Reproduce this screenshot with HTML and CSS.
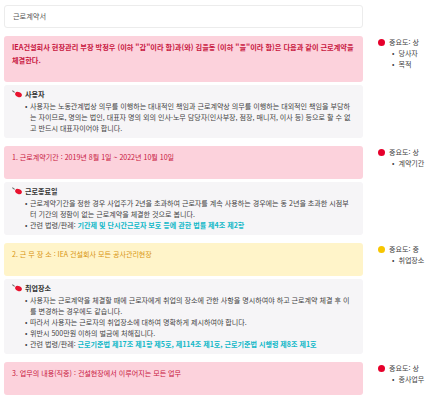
FILE: index.html
```html
<!DOCTYPE html>
<html lang="ko">
<head>
    <meta charset="UTF-8">
    <meta name="viewport" content="width=device-width, initial-scale=1.0">
    <title>근로계약서</title>
    <link rel="stylesheet" href="styles.css">
</head>
<body>
    <div class="review">
        <div class="main-col">
            <div class="doc-title">근로계약서</div>
        </div>
        <div class="side-col"></div>

        <!-- 당사자 -->
        <div class="main-col group">
            <div class="clause clause-red clause-bold">
                IEA건설회사 현장관리 부장 박정우 (이하 "갑"이라 함)과(와) 김을동 (이하 "을"이라 함)은 다음과 같이 근로계약을 체결한다.
            </div>
            <div class="detail">
                <div class="detail-title"><span class="pin"></span>사용자</div>
                <ul class="detail-list">
                    <li>사용자는 노동관계법상 의무를 이행하는 대내적인 책임과 근로계약상 의무를 이행하는 대외적인 책임을 부담하는 자이므로, 명의는 법인, 대표자 명의 외의 인사·노무 담당자(인사부장, 점장, 매니저, 이사 등) 등으로 할 수 없고 반드시 대표자이어야 합니다.</li>
                </ul>
            </div>
        </div>
        <div class="side-col">
            <div class="note">
                <div class="note-level"><span class="dot dot-high"></span>중요도: 상</div>
                <ul class="note-list">
                    <li>당사자</li>
                    <li>목적</li>
                </ul>
            </div>
        </div>

        <!-- 계약기간 -->
        <div class="main-col group">
            <div class="clause clause-red">1. 근로계약기간 : 2019년 8월 1일 ~ 2022년 10월 10일</div>
            <div class="detail">
                <div class="detail-title"><span class="pin"></span>근로종료일</div>
                <ul class="detail-list">
                    <li>근로계약기간을 정한 경우 사업주가 2년을 초과하여 근로자를 계속 사용하는 경우에는 동 2년을 초과한 시점부터 기간의 정함이 없는 근로계약을 체결한 것으로 봅니다.</li>
                    <li>관련 법령/판례: <span class="law">기간제 및 단시간근로자 보호 등에 관한 법률 제4조 제2항</span></li>
                </ul>
            </div>
        </div>
        <div class="side-col">
            <div class="note">
                <div class="note-level"><span class="dot dot-high"></span>중요도: 상</div>
                <ul class="note-list">
                    <li>계약기간</li>
                </ul>
            </div>
        </div>

        <!-- 근무장소 -->
        <div class="main-col group">
            <div class="clause clause-yellow">2. 근 무 장 소 : IEA 건설회사 모든 공사관리현장</div>
            <div class="detail">
                <div class="detail-title"><span class="pin"></span>취업장소</div>
                <ul class="detail-list">
                    <li>사용자는 근로계약을 체결할 때에 근로자에게 취업의 장소에 관한 사항을 명시하여야 하고 근로계약 체결 후 이를 변경하는 경우에도 같습니다.</li>
                    <li>따라서 사용자는 근로자의 취업장소에 대하여 명확하게 제시하여야 합니다.</li>
                    <li>위반시 500만원 이하의 벌금에 처해집니다.</li>
                    <li>관련 법령/판례: <span class="law">근로기준법 제17조 제1항 제5호, 제114조 제1호, 근로기준법 시행령 제8조 제1호</span></li>
                </ul>
            </div>
        </div>
        <div class="side-col">
            <div class="note">
                <div class="note-level"><span class="dot dot-mid"></span>중요도: 중</div>
                <ul class="note-list">
                    <li>취업장소</li>
                </ul>
            </div>
        </div>

        <!-- 업무 -->
        <div class="main-col group">
            <div class="clause clause-red">3. 업무의 내용(직종) : 건설현장에서 이루어지는 모든 업무</div>
        </div>
        <div class="side-col">
            <div class="note">
                <div class="note-level"><span class="dot dot-high"></span>중요도: 상</div>
                <ul class="note-list">
                    <li>종사업무</li>
                </ul>
            </div>
        </div>
    </div>
</body>
</html>
```

FILE: styles.css
```css
* {
    margin: 0;
    padding: 0;
    box-sizing: border-box;
}

body {
    font-family: "Noto Sans CJK KR", "Noto Sans", sans-serif;
    font-size: 7.05px;
    line-height: 11px;
    color: #444;
    background: #fff;
}

.review {
    display: grid;
    grid-template-columns: 359px 1fr;
    column-gap: 15px;
    padding: 5px 0 0 4px;
}

.main-col {
    display: flex;
    flex-direction: column;
    gap: 3px;
}

.group {
    margin-top: 8px;
}

.side-col {
    padding-top: 8px;
}

.doc-title {
    height: 23px;
    line-height: 21px;
    padding: 0 8px;
    border: 1px solid #ececec;
    border-radius: 3px;
    font-size: 7.2px;
    color: #555;
}

.clause {
    padding: 5px 8px 15px;
    line-height: 13px;
    border-radius: 3px;
}

.clause-red {
    background: #fcd2dc;
    color: #c8173f;
}

.clause-bold {
    font-weight: 700;
    font-size: 7.2px;
}

.clause-yellow {
    background: #fff4c9;
    color: #d99512;
}

.detail {
    background: #f6f5f7;
    border-radius: 3px;
    padding: 3px 8px 4px;
}

.detail-title {
    display: flex;
    align-items: center;
    line-height: 12px;
    margin-bottom: 1px;
    font-weight: 700;
    color: #333;
}

.pin {
    width: 10px;
    height: 7px;
    margin-right: 3px;
    position: relative;
}

.pin::before {
    content: "";
    position: absolute;
    left: 0;
    top: 0;
    width: 3px;
    height: 1px;
    background: #666;
    transform: rotate(40deg);
}

.pin::after {
    content: "";
    position: absolute;
    left: 3px;
    top: 1px;
    width: 7px;
    height: 5px;
    border-radius: 50%;
    background: #e8132f;
    transform: rotate(25deg);
}

.detail-list {
    list-style: none;
    padding-left: 13px;
}

.detail-list li {
    position: relative;
    padding-left: 5px;
}

.detail-list li::before {
    content: "•";
    position: absolute;
    left: 0;
}

.law {
    color: #10b8c8;
    font-weight: 700;
}

.note {
    padding-top: 1px;
    color: #444;
}

.note-level {
    display: flex;
    align-items: center;
    gap: 4px;
}

.dot {
    width: 7px;
    height: 7px;
    border-radius: 50%;
}

.dot-high {
    background: #e6002b;
}

.dot-mid {
    background: #f7c600;
}

.note-list {
    list-style: none;
    padding-left: 14px;
}

.note-list li::before {
    content: "•";
    margin-right: 4px;
}
```
